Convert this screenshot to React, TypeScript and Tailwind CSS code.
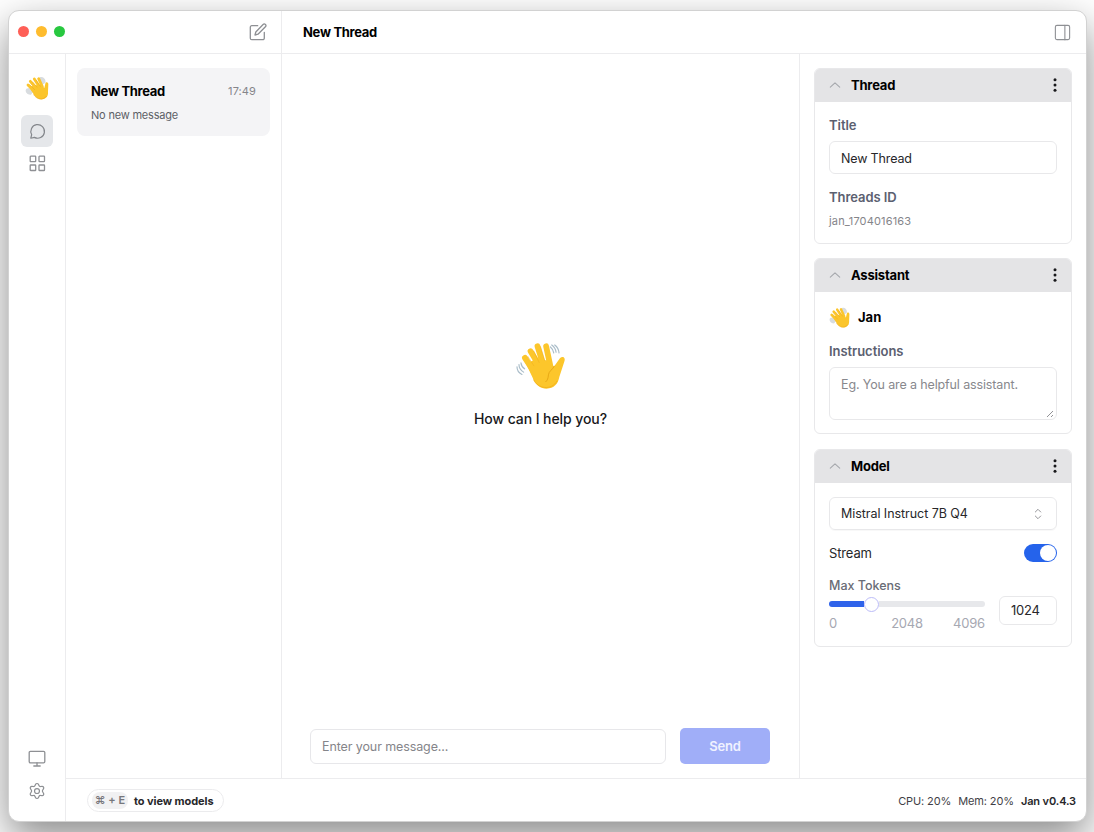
import type { ReactNode } from 'react';
import { PanelRight } from 'lucide-react';

function Wave({ className }: { className: string }) {
  return (
    <svg viewBox="46 34 154 146" className={className} fill="none" strokeLinecap="round" strokeLinejoin="round">
      <g stroke="#a9bcc8" strokeWidth="3.5">
        <path d="M52 111c0 11 6 19 15 23M58 104c0 11 6 18 14 23M64 99c1 8 5 14 11 18" />
        <path d="M157 45c7 5 12 12 13 22M166 45c7 5 12 13 13 24M153 51c6 5 9 11 10 18" />
      </g>
      <g stroke="#fcc62b" strokeWidth="17.5">
        <path d="M76 84l30 46M93 64l29 48M114 49l18 58M140 49l12 56" />
      </g>
      <path
        fill="#fcc62b"
        d="M80 103l19 40c8 24 26 34 42 34 23-1 35-14 39-36l15-46c5-12-6-19-14-9l-17 24-15-18-44-3z"
      />
      <path stroke="#e2a010" strokeWidth="2.5" d="M165 109c-6 11-17 15-18 26-1 12-3 16-8 21" />
      <path stroke="#efad18" strokeWidth="1.500" d="M85 80l18 28M103 64l16 34M123 50l13 42" />
      <path stroke="#f3b01a" strokeWidth="2.5" d="M103 151c10 25 53 34 70 3" />
    </svg>
  );
}

function SmallWave({ className }: { className: string }) {
  return (
    <svg viewBox="0 0 72 72" className={className} fill="none" strokeLinecap="round" strokeLinejoin="round">
      <path fill="#d8dcdf" d="M4 38c-6 7 2 20 14 18l6-8-12-12zM44 4c10-5 20 6 17 16l-8 6-10-12z" />
      <path stroke="#fbc52c" strokeWidth="8.500" d="M9 27l22 22M16 16l22 26M28 9l17 26M41 8l11 24" />
      <path fill="#fbc52c" d="M12 34l14 21c6 11 15 16 26 15 12-2 18-10 17-23l1-22c0-7-8-8-9-2l-3 13-9-9-20 1z" />
      <path stroke="#eda51c" strokeWidth="1.500" d="M14 26l15 15M23 18l13 15M34 13l12 18M26 56c8 14 27 19 38 5" />
    </svg>
  );
}

function Caret() {
  return (
    <svg width="12" height="8" viewBox="0 0 12 8" fill="none" stroke="#a6a8ad" strokeWidth="1.1" strokeLinecap="round" strokeLinejoin="round">
      <path d="M1.3 6.2 6 1.8l4.7 4.4" />
    </svg>
  );
}

function Card({ title, className, children }: { title: string; className: string; children: ReactNode }) {
  return (
    <section className={`flex w-[258px] shrink-0 flex-col overflow-hidden rounded-md border border-[#e8e8ea] ${className}`}>
      <div className="flex h-[33px] shrink-0 items-center border-b border-[#e4e4e6] bg-[#e4e4e6] pr-3 pl-[14px]">
        <Caret />
        <h2 className="ml-[10px] flex-1 pt-px text-[13px] font-bold tracking-[-0.2px]">{title}</h2>
        <svg width="8" height="16" viewBox="0 0 8 16" fill="#18181b">
          <circle cx="4" cy="2.7" r="1.5" />
          <circle cx="4" cy="8" r="1.5" />
          <circle cx="4" cy="13.3" r="1.5" />
        </svg>
      </div>
      <div className="flex flex-1 flex-col px-[14px]">{children}</div>
    </section>
  );
}

const label = 'text-[13px] leading-4 font-semibold tracking-[-0.05px] text-[#5b6070]';

export default function App() {
  return (
    <div className="h-[832px] w-[1094px] overflow-hidden bg-white pt-[10px] pl-[8px] font-['Inter',sans-serif] text-black">
      <div className="flex h-[812px] w-[1079px] flex-col overflow-hidden rounded-[11px] border border-[#d2d2d2] bg-white shadow-[0_16px_40px_rgba(0,0,0,0.46)]">
        <header className="flex h-[43px] shrink-0 border-b border-[#ececee]">
          <div className="flex w-[273px] items-center border-r border-[#ececee] pr-[14px] pl-[9px]">
            <div className="flex flex-1 gap-[7px] pb-px">
              <span className="size-[11px] rounded-full bg-[#fe5f57]" />
              <span className="size-[11px] rounded-full bg-[#febc2e]" />
              <span className="size-[11px] rounded-full bg-[#28c840]" />
            </div>
            <svg width="18" height="18" viewBox="0 0 18 18" fill="none" stroke="#8e9094" strokeWidth="1.3" strokeLinejoin="round" strokeLinecap="round">
              <path d="M8.7 2.7H2.8A1.5 1.5 0 0 0 1.3 4.2v11A1.5 1.5 0 0 0 2.8 16.700h11a1.500 1.500 0 0 0 1.500-1.500V9.300" />
              <path d="M14.100 1.500a1.600 1.600 0 0 1 2.300 2.300L9 11.200l-3 .8.8-3z" />
            </svg>
          </div>
          <div className="flex flex-1 items-center justify-between pr-[14px] pl-[22px]">
            <h1 className="-ml-px pt-px text-[13px] font-bold tracking-[-0.3px]">New Thread</h1>
            <PanelRight size={19} strokeWidth={1.4} color="#8e9094" />
          </div>
        </header>

        <div className="flex min-h-0 flex-1">
          <nav className="flex w-[57px] shrink-0 flex-col items-center border-r border-[#ececee] pt-[22px] pb-[21px]">
            <SmallWave className="size-6" />
            <div className="mt-[15px] flex size-8 items-center justify-center rounded-md bg-[#e5e7ea]">
              <svg width="17" height="17" viewBox="0 0 24 24" fill="none" stroke="#85888d" strokeWidth="1.7" strokeLinecap="round" strokeLinejoin="round">
                <path d="M2.500 21.500 3.800 16.500A9.600 9.600 0 1 1 7.600 20.300Z" />
              </svg>
            </div>
            <svg className="mt-2" width="17" height="17" viewBox="0 0 17 17" fill="none" stroke="#8e9094" strokeWidth="1.300">
              <rect x="1.200" y="1.200" width="5.500" height="5.500" rx=".6" />
              <rect x="10" y="1.200" width="5.500" height="5.500" rx=".6" />
              <rect x="1.200" y="10" width="5.500" height="5.500" rx=".6" />
              <rect x="10" y="10" width="5.500" height="5.500" rx=".6" />
            </svg>
            <svg className="mt-auto" width="18" height="18" viewBox="0 0 18 18" fill="none" stroke="#8e9094" strokeWidth="1.300" strokeLinecap="round">
              <rect x="1.200" y="2.300" width="15.600" height="11.500" rx="1.200" />
              <path d="M9 13.800v3M5.800 17h6.400" />
            </svg>
            <svg className="mt-[15px]" width="18" height="18" viewBox="0 0 24 24" fill="none" stroke="#8e9094" strokeWidth="1.600" strokeLinecap="round" strokeLinejoin="round">
              <path d="M10 3.300C10.700 1.600 13.300 1.600 14 3.300L14.600 4.700A2.200 2.200 0 0 0 17 6L18.600 5.800C20.500 5.600 21.700 7.700 20.600 9.200L19.700 10.600A2.200 2.200 0 0 0 19.700 13.400L20.600 14.800C21.700 16.300 20.500 18.400 18.600 18.200L17 18A2.200 2.200 0 0 0 14.600 19.300L14 20.700C13.300 22.400 10.700 22.400 10 20.700L9.400 19.300A2.200 2.200 0 0 0 7 18L5.400 18.200C3.500 18.400 2.300 16.300 3.400 14.800L4.300 13.400A2.200 2.200 0 0 0 4.300 10.600L3.400 9.200C2.300 7.700 3.500 5.600 5.400 5.800L7 6A2.200 2.200 0 0 0 9.400 4.700Z" />
              <circle cx="12" cy="12" r="3.300" />
            </svg>
          </nav>

          <div className="flex min-w-0 flex-1 flex-col">
            <div className="flex min-h-0 flex-1">
              <aside className="w-[216px] shrink-0 border-r border-[#ececee] pt-[14px] pl-[11px]">
                <div className="h-[68px] w-[193px] rounded-lg bg-[#f4f4f6] px-[14px] pt-[15px]">
                  <div className="flex items-center justify-between leading-4">
                    <span className="text-[13px] font-bold tracking-[-0.3px]">New Thread</span>
                    <span className="text-[11px] tracking-[0.1px] text-[#85858b]">17:49</span>
                  </div>
                  <p className="mt-2 text-[11px] leading-4 tracking-[-0.2px] text-[#5c5f66]">No new message</p>
                </div>
              </aside>

              <main className="flex min-w-0 flex-1 flex-col">
                <div className="flex flex-1 flex-col items-center pt-[287px]">
                  <Wave className="h-[49px] w-[51px]" />
                  <p className="mt-[19px] text-[14px] leading-5 font-medium tracking-[-0.08px] text-[#18181b]">How can I help you?</p>
                </div>
                <div className="flex items-end gap-[14px] pr-[29px] pb-[14px] pl-7">
                  <div className="flex h-[35px] flex-1 items-center rounded-md border border-[#e7e7ea] pt-[2px] pl-[11px] text-[12.5px] tracking-[-0.1px] text-[#85858a]">
                    Enter your message...
                  </div>
                  <button className="h-9 w-[90px] rounded-[5px] bg-[#a0aef8] pt-px text-[13px] font-semibold tracking-[-0.2px] text-[#f0f2ff]">Send</button>
                </div>
              </main>

              <aside className="flex w-[287px] shrink-0 flex-col gap-[14px] border-l border-[#ececee] pt-[14px] pl-[14px]">
                <Card title="Thread" className="h-[176px]">
                  <div className={`mt-[15px] ${label}`}>Title</div>
                  <div className="mt-2 flex h-[33px] items-center rounded-md border border-[#e8e8ea] px-[11px] pt-[4px] text-[12.5px] tracking-[-0.15px] text-[#27272a]">New Thread</div>
                  <div className={`mt-[15px] ${label}`}>Threads ID</div>
                  <div className="mt-2 text-[11px] leading-4 tracking-[0.15px] text-[#85858a]">jan_1704016163</div>
                </Card>
                <Card title="Assistant" className="h-[176px]">
                  <div className="mt-[14px] flex h-[22px] items-center gap-2">
                    <SmallWave className="size-[21px]" />
                    <span className="pt-px text-[13px] font-bold">Jan</span>
                  </div>
                  <div className={`mt-[15px] ${label}`}>Instructions</div>
                  <div className="mt-2 flex h-[53px] justify-between rounded-md border border-[#e8e8ea] pt-[9px] pl-[11px]">
                    <span className="text-[12.5px] leading-4 tracking-[-0.13px] text-[#88888d]">Eg. You are a helpful assistant.</span>
                    <svg className="self-end" width="10" height="10" viewBox="0 0 10 10" stroke="#929296" strokeWidth="1">
                      <path d="m1 8 6-6M5 8l2-2" />
                    </svg>
                  </div>
                </Card>
                <Card title="Model" className="mt-px h-[198px]">
                  <div className="mt-[14px] flex h-[33px] shrink-0 items-center justify-between rounded-md border border-[#e8e8ea] pr-[14px] pl-[11px] text-[12.5px] tracking-[-0.05px] text-[#27272a] shadow-[0_1px_1px_rgba(0,0,0,0.03)]">
                    <span className="pt-[2px]">Mistral Instruct 7B Q4</span>
                    <svg width="8" height="12" viewBox="0 0 8 12" fill="none" stroke="#96969a" strokeWidth="1" strokeLinecap="round" strokeLinejoin="round">
                      <path d="m1.300 4 2.700-2.700L6.700 4M1.300 8 4 10.700 6.700 8" />
                    </svg>
                  </div>
                  <div className="mt-[14px] flex h-[18px] items-center justify-between text-[13px] tracking-[-0.15px] text-[#27272a]">
                    <span className="pt-[2px]">Stream</span>
                    <span className="flex h-[18px] w-[33px] items-center justify-end rounded-full bg-[#2563eb] pr-px">
                      <span className="size-4 rounded-full bg-white" />
                    </span>
                  </div>
                  <div className="mt-[15px] h-4 pt-px text-[12.5px] leading-4 font-medium text-[#696c76]">Max Tokens</div>
                  <div className="flex gap-[14px]">
                    <div className="w-[156px]">
                      <div className="mt-[3px] flex h-[16px] items-center">
                        <span className="h-[6px] w-[35px] rounded-l-full bg-[#2f63ea]" />
                        <span className="size-[15px] shrink-0 rounded-full border-[1.5px] border-[#bcbcf8] bg-white" />
                        <span className="h-[6px] flex-1 rounded-r-full bg-[#e7e8eb]" />
                      </div>
                      <div className="mt-[3px] flex justify-between text-[13px] leading-4 tracking-[-0.2px] text-[#a6a8b2]">
                        <span>0</span>
                        <span className="pl-[24px]">2048</span>
                        <span>4096</span>
                      </div>
                    </div>
                    <div className="mt-[3px] flex h-[29px] w-[58px] items-center rounded-md border border-[#e8e8ea] pt-px pl-[11px] text-[13px] tracking-[-0.2px] text-[#27272a]">1024</div>
                  </div>
                </Card>
              </aside>
            </div>

            <footer className="flex h-[43px] shrink-0 items-center justify-between border-t border-[#ececee] pr-[10px] pl-[21px] text-[11px]">
              <div className="mt-px flex h-[23px] w-[137px] items-center rounded-full border border-[#ebebed] pl-1">
                <span className="flex h-[17px] w-[36px] items-center justify-center rounded-lg bg-[#f1f1f2] font-semibold text-[#77777c]">⌘ + E</span>
                <span className="ml-[6px] pt-px font-bold tracking-[-0.08px] whitespace-nowrap text-[#27272a]">to view models</span>
              </div>
              <div className="flex gap-[7px] pt-[2px] tracking-[-0.12px] text-[#3f3f46]">
                <span>CPU: 20%</span>
                <span>Mem: 20%</span>
                <span className="font-semibold text-[#27272a]">Jan v0.4.3</span>
              </div>
            </footer>
          </div>
        </div>
      </div>
    </div>
  );
}
